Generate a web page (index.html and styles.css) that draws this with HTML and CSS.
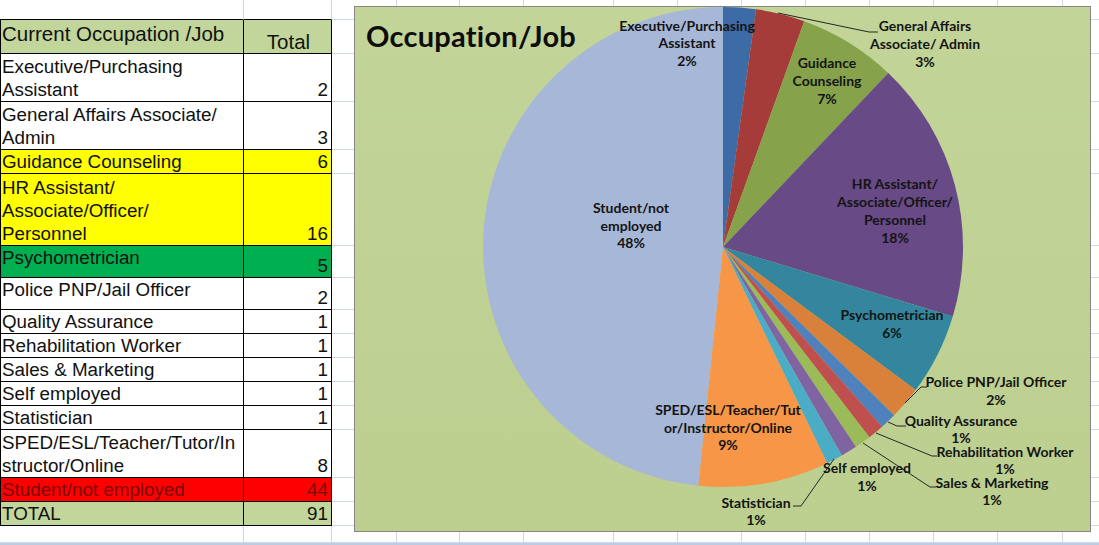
FILE: index.html
```html
<!DOCTYPE html>
<html lang="en">
<head>
<meta charset="utf-8">
<title>Occupation/Job</title>
<link rel="stylesheet" href="styles.css">
</head>
<body>
<div class="sheet">
  <div class="grid">
    <div class="c a r1"></div><div class="c b r1"></div><div class="c rest"></div>

    <div class="c a t hd top hdlbl"><span>Current Occupation /Job</span></div><div class="c b t hd hdnum"><span>Total</span></div><div class="c rest"></div>

    <div class="c a t"><span>Executive/Purchasing<br>Assistant</span></div><div class="c b t"><span>2</span></div><div class="c rest"></div>
    <div class="c a t"><span>General Affairs Associate/<br>Admin</span></div><div class="c b t"><span>3</span></div><div class="c rest"></div>
    <div class="c a t yel"><span>Guidance Counseling</span></div><div class="c b t yel"><span>6</span></div><div class="c rest"></div>
    <div class="c a t yel"><span>HR Assistant/<br>Associate/Officer/<br>Personnel</span></div><div class="c b t yel"><span>16</span></div><div class="c rest"></div>
    <div class="c a t grn top"><span>Psychometrician</span></div><div class="c b t grn"><span>5</span></div><div class="c rest"></div>
    <div class="c a t top"><span>Police PNP/Jail Officer</span></div><div class="c b t"><span>2</span></div><div class="c rest"></div>
    <div class="c a t"><span>Quality Assurance</span></div><div class="c b t"><span>1</span></div><div class="c rest"></div>
    <div class="c a t"><span>Rehabilitation Worker</span></div><div class="c b t"><span>1</span></div><div class="c rest"></div>
    <div class="c a t"><span>Sales &amp; Marketing</span></div><div class="c b t"><span>1</span></div><div class="c rest"></div>
    <div class="c a t"><span>Self employed</span></div><div class="c b t"><span>1</span></div><div class="c rest"></div>
    <div class="c a t"><span>Statistician</span></div><div class="c b t"><span>1</span></div><div class="c rest"></div>
    <div class="c a t"><span>SPED/ESL/Teacher/Tutor/In<br>structor/Online</span></div><div class="c b t"><span>8</span></div><div class="c rest"></div>
    <div class="c a t red"><span>Student/not employed</span></div><div class="c b t red"><span>44</span></div><div class="c rest"></div>
    <div class="c a t tot"><span>TOTAL</span></div><div class="c b t tot"><span>91</span></div><div class="c rest"></div>

    <div class="c a"></div><div class="c b"></div><div class="c rest"></div>
  </div>
  <div class="hscroll"></div>

  <div class="chart">
    <h1 class="chart-title">Occupation/Job</h1>
    <svg class="pie" width="735" height="524" viewBox="0 0 735 524">
      <g transform="translate(-1,-1)">
        <path class="s-exec" d="M369,241 L369,1 A240,240 0 0 1 402.04,3.28 Z"/>
        <path class="s-ga" d="M369,241 L402.04,3.28 A240,240 0 0 1 450.22,15.16 Z"/>
        <path class="s-guid" d="M369,241 L450.22,15.16 A240,240 0 0 1 534.25,66.95 Z"/>
        <path class="s-hr" d="M369,241 L534.25,66.95 A240,240 0 0 1 598.74,310.42 Z"/>
        <path class="s-psy" d="M369,241 L598.74,310.42 A240,240 0 0 1 561.69,384.07 Z"/>
        <path class="s-pol" d="M369,241 L561.69,384.07 A240,240 0 0 1 540.16,409.24 Z"/>
        <path class="s-qa" d="M369,241 L540.16,409.24 A240,240 0 0 1 528.15,420.64 Z"/>
        <path class="s-reh" d="M369,241 L528.15,420.64 A240,240 0 0 1 515.38,431.2 Z"/>
        <path class="s-sal" d="M369,241 L515.38,431.2 A240,240 0 0 1 501.9,440.84 Z"/>
        <path class="s-self" d="M369,241 L501.9,440.84 A240,240 0 0 1 487.8,449.54 Z"/>
        <path class="s-stat" d="M369,241 L487.8,449.54 A240,240 0 0 1 473.13,457.23 Z"/>
        <path class="s-sped" d="M369,241 L473.13,457.23 A240,240 0 0 1 344.19,479.71 Z"/>
        <path class="s-stu" d="M369,241 L344.19,479.71 A240,240 0 0 1 369,1 Z"/>

        <polyline class="leader" points="424,7 515,26 524,26"/>
        <polyline class="leader" points="551,397 567,381 573,381"/>
        <polyline class="leader" points="534,416 543,420 552,420"/>
        <polyline class="leader" points="522,427 578,450 583,450"/>
        <polyline class="leader" points="509,437 576,481 582,481"/>
        <polyline class="leader" points="480,453 447,500 439,500"/>

        <text class="lbl"><tspan x="333" y="25">Executive/Purchasing</tspan><tspan x="333" y="42">Assistant</tspan><tspan x="333" y="60">2%</tspan></text>
        <text class="lbl"><tspan x="571" y="25">General Affairs</tspan><tspan x="571" y="43">Associate/ Admin</tspan><tspan x="571" y="61">3%</tspan></text>
        <text class="lbl"><tspan x="473" y="62">Guidance</tspan><tspan x="473" y="80">Counseling</tspan><tspan x="473" y="98">7%</tspan></text>
        <text class="lbl"><tspan x="541" y="183">HR Assistant/</tspan><tspan x="541" y="201">Associate/Officer/</tspan><tspan x="541" y="219">Personnel</tspan><tspan x="541" y="237">18%</tspan></text>
        <text class="lbl"><tspan x="538" y="314">Psychometrician</tspan><tspan x="538" y="332">6%</tspan></text>
        <text class="lbl"><tspan x="642" y="381">Police PNP/Jail Officer</tspan><tspan x="642" y="399">2%</tspan></text>
        <text class="lbl"><tspan x="607" y="420">Quality Assurance</tspan><tspan x="607" y="437">1%</tspan></text>
        <text class="lbl"><tspan x="651" y="451">Rehabilitation Worker</tspan><tspan x="651" y="468">1%</tspan></text>
        <text class="lbl"><tspan x="638" y="482">Sales &amp; Marketing</tspan><tspan x="638" y="499">1%</tspan></text>
        <text class="lbl"><tspan x="513" y="467">Self employed</tspan><tspan x="513" y="485">1%</tspan></text>
        <text class="lbl"><tspan x="402" y="502">Statistician</tspan><tspan x="402" y="519">1%</tspan></text>
        <text class="lbl"><tspan x="374" y="409">SPED/ESL/Teacher/Tut</tspan><tspan x="374" y="427">or/Instructor/Online</tspan><tspan x="374" y="444">9%</tspan></text>
        <text class="lbl"><tspan x="277" y="207">Student/not</tspan><tspan x="277" y="225">employed</tspan><tspan x="277" y="242">48%</tspan></text>
      </g>
    </svg>
  </div>
</div>
</body>
</html>
```

FILE: styles.css
```css
html, body {
  margin: 0;
  padding: 0;
  background: #ffffff;
}

.sheet {
  position: relative;
  width: 1099px;
  height: 545px;
  overflow: hidden;
  font-family: "Liberation Sans", Arial, sans-serif;
  color: #111111;
}

.grid {
  display: grid;
  grid-template-columns: 244px 88px 1fr;
  grid-template-rows: 20px 34px 48px 48px 24px 72px 32px 32px 24px 24px 24px 24px 24px 48px 24px 24px 17px;
}

.c {
  box-sizing: border-box;
  border-right: 1px solid #d0d7e5;
  border-bottom: 1px solid #d0d7e5;
  display: flex;
  flex-direction: column;
  justify-content: flex-end;
  white-space: nowrap;
  overflow: hidden;
  font-size: 18.8px;
  line-height: 23px;
  padding: 0 2px;
}

.a.t {
  border-left: 1px solid #000000;
  padding-left: 1px;
}

.t {
  border-right-color: #000000;
  border-bottom-color: #000000;
}

.a.r1,
.b.r1 {
  border-bottom-color: #000000;
}

.b {
  align-items: flex-end;
  padding-right: 3px;
}

.top {
  justify-content: flex-start;
}

.hd {
  background: #c2d59a;
  font-size: 20.5px;
}

.hdlbl {
  padding-top: 2px;
}

.hdnum {
  align-items: center;
  padding-right: 0;
  padding-left: 2px;
}

.yel {
  background: #ffff00;
}

.grn {
  background: #00b050;
}

.red {
  background: #ff0000;
  color: #7a0a0a;
}

.tot {
  background: #c2d59a;
}

.rest {
  border-right: none;
  padding: 0;
  background-image:
    linear-gradient(#d0d7e5, #d0d7e5), linear-gradient(#d0d7e5, #d0d7e5),
    linear-gradient(#d0d7e5, #d0d7e5), linear-gradient(#d0d7e5, #d0d7e5),
    linear-gradient(#d0d7e5, #d0d7e5), linear-gradient(#d0d7e5, #d0d7e5),
    linear-gradient(#d0d7e5, #d0d7e5), linear-gradient(#d0d7e5, #d0d7e5),
    linear-gradient(#d0d7e5, #d0d7e5), linear-gradient(#d0d7e5, #d0d7e5),
    linear-gradient(#d0d7e5, #d0d7e5);
  background-size: 1px 100%;
  background-repeat: no-repeat;
  background-position: 64px 0, 127px 0, 191px 0, 281px 0, 345px 0, 409px 0,
    473px 0, 537px 0, 601px 0, 665px 0, 730px 0;
}

.hscroll {
  height: 2px;
  background: #bccde3;
}

/* Chart object floating over the worksheet */
.chart {
  position: absolute;
  left: 354px;
  top: 6px;
  width: 737px;
  height: 526px;
  box-sizing: border-box;
  border: 1px solid #868686;
  background: linear-gradient(to bottom, #c2d498, #bccf8f);
}

.chart-title {
  position: relative;
  z-index: 1;
  margin: 0;
  padding: 14px 0 0 11px;
  font-family: Lato, "Open Sans", sans-serif;
  font-weight: 700;
  font-size: 29px;
  line-height: 29px;
  letter-spacing: 0.25px;
  color: #0d0d0d;
}

.pie {
  position: absolute;
  left: 0;
  top: 0;
  overflow: visible;
}

.s-exec { fill: #3d6ba6; }
.s-ga { fill: #a63c39; }
.s-guid { fill: #86a34b; }
.s-hr { fill: #684a86; }
.s-psy { fill: #33869d; }
.s-pol { fill: #d9813a; }
.s-qa { fill: #4f81bd; }
.s-reh { fill: #c0504d; }
.s-sal { fill: #9bbb59; }
.s-self { fill: #8064a2; }
.s-stat { fill: #4bacc6; }
.s-sped { fill: #f79646; }
.s-stu { fill: #a7b7d8; }

.leader {
  fill: none;
  stroke: #262626;
  stroke-width: 1;
}

.lbl {
  font-family: Lato, "Open Sans", sans-serif;
  font-weight: 700;
  font-size: 14px;
  fill: #141414;
  text-anchor: middle;
}
```
